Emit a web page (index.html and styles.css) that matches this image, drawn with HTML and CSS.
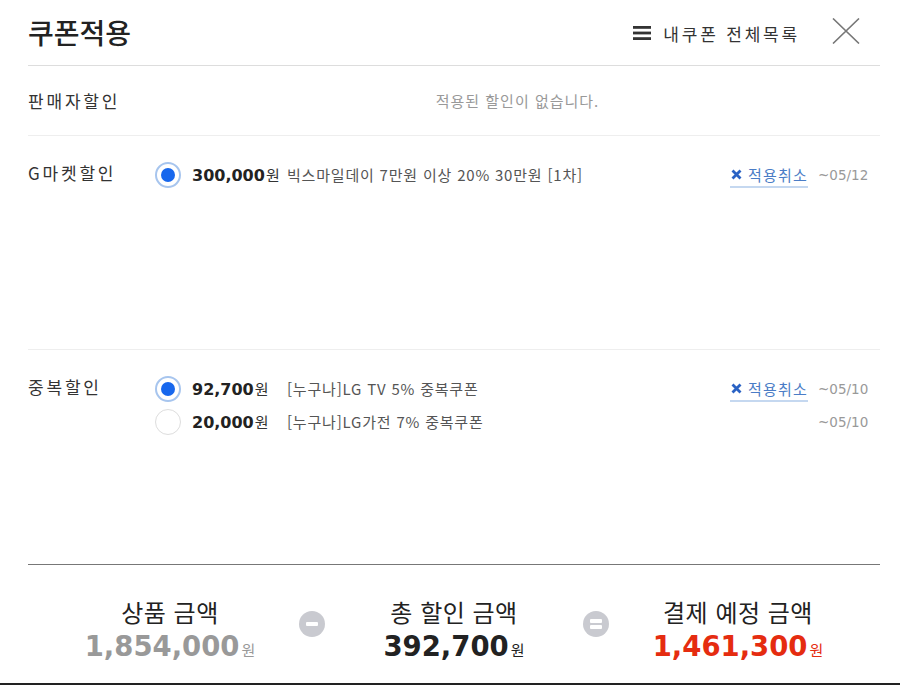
FILE: index.html
```html
<!DOCTYPE html>
<html lang="ko">
<head>
  <meta charset="UTF-8">
  <meta name="viewport" content="width=device-width, initial-scale=1.0">
  <title>쿠폰적용</title>
  <link rel="stylesheet" href="styles.css">
</head>
<body>
  <div class="layer">
    <header class="layer-head">
      <h1 class="title">쿠폰적용</h1>
      <a class="my-coupons" href="#">
        <svg class="menu-icon" width="18" height="14" viewBox="0 0 18 14">
          <rect x="0" y="0" width="18" height="2.8" fill="#333"/>
          <rect x="0" y="5.6" width="18" height="2.8" fill="#333"/>
          <rect x="0" y="11.2" width="18" height="2.8" fill="#333"/>
        </svg>
        내쿠폰 전체목록
      </a>
      <button class="close" type="button" aria-label="닫기">
        <svg width="28" height="26" viewBox="0 0 28 26">
          <path d="M1 0.5 L27 25.5 M27 0.5 L1 25.5" stroke="#777" stroke-width="1.6" fill="none"/>
        </svg>
      </button>
    </header>

    <section class="group group-seller">
      <div class="group-label">판매자할인</div>
      <div class="group-body">
        <p class="empty">적용된 할인이 없습니다.</p>
      </div>
    </section>

    <section class="group group-tall">
      <div class="group-label">G마켓할인</div>
      <ul class="group-body coupons">
        <li class="coupon">
          <span class="radio checked"></span>
          <span class="amount"><b>300,000</b>원</span>
          <span class="desc">빅스마일데이 7만원 이상 20% 30만원 [1차]</span>
          <a class="cancel" href="#">
            <svg class="cancel-x" width="11" height="11" viewBox="0 0 11 11">
              <path d="M1.5 1.5 L9.5 9.5 M9.5 1.5 L1.5 9.5" stroke="#2a62c4" stroke-width="2.8" fill="none"/>
            </svg>적용취소</a>
          <span class="date">~05/12</span>
        </li>
      </ul>
    </section>

    <section class="group group-tall group-last">
      <div class="group-label">중복할인</div>
      <ul class="group-body coupons">
        <li class="coupon">
          <span class="radio checked"></span>
          <span class="amount"><b>92,700</b>원</span>
          <span class="desc">[누구나]LG TV 5% 중복쿠폰</span>
          <a class="cancel" href="#">
            <svg class="cancel-x" width="11" height="11" viewBox="0 0 11 11">
              <path d="M1.5 1.5 L9.5 9.5 M9.5 1.5 L1.5 9.5" stroke="#2a62c4" stroke-width="2.8" fill="none"/>
            </svg>적용취소</a>
          <span class="date">~05/10</span>
        </li>
        <li class="coupon">
          <span class="radio"></span>
          <span class="amount"><b>20,000</b>원</span>
          <span class="desc">[누구나]LG가전 7% 중복쿠폰</span>
          <span class="date">~05/10</span>
        </li>
      </ul>
    </section>

    <div class="summary">
      <div class="sum-item">
        <div class="sum-label">상품 금액</div>
        <div class="sum-price price-gray"><b>1,854,000</b>원</div>
      </div>
      <span class="op op-minus"></span>
      <div class="sum-item">
        <div class="sum-label">총 할인 금액</div>
        <div class="sum-price"><b>392,700</b>원</div>
      </div>
      <span class="op op-equal"></span>
      <div class="sum-item">
        <div class="sum-label">결제 예정 금액</div>
        <div class="sum-price price-red"><b>1,461,300</b>원</div>
      </div>
    </div>
  </div>
</body>
</html>
```

FILE: styles.css
```css
* {
  box-sizing: border-box;
}

body {
  margin: 0;
  width: 900px;
  height: 685px;
  background: #fff;
  color: #333;
  font-family: 'Noto Sans CJK KR', 'Noto Sans', sans-serif;
}

ul {
  margin: 0;
  padding: 0;
  list-style: none;
}

a {
  text-decoration: none;
}

.layer {
  height: 685px;
  padding: 0 20px 0 28px;
  border-bottom: 2px solid #222;
}

.layer-head {
  display: flex;
  align-items: center;
  height: 66px;
  border-bottom: 1px solid #ddd;
}

.title {
  flex: 1;
  margin: 0;
  font-size: 28px;
  font-weight: 500;
  color: #222;
  line-height: 63px;
}

.my-coupons {
  display: flex;
  align-items: center;
  gap: 12px;
  margin-top: 1px;
  font-size: 17px;
  letter-spacing: 2.8px;
  color: #333;
}

.close {
  margin: 0 20px 3px 32px;
  padding: 0;
  border: 0;
  background: none;
  display: flex;
}

.group {
  display: flex;
  border-bottom: 1px solid #eee;
}

.group-label {
  width: 127px;
  flex-shrink: 0;
  font-size: 17px;
  letter-spacing: 2.8px;
  color: #333;
}

.group-body {
  flex: 1;
}

.group-seller {
  height: 70px;
  align-items: center;
}

.group-seller .group-label {
  padding-bottom: 1px;
}

.empty {
  margin: 0;
  text-align: center;
  font-size: 15px;
  letter-spacing: 1px;
  color: #999;
}

.group-tall {
  height: 214px;
  padding-top: 22px;
}

.group-tall .group-label {
  line-height: 29px;
}

.group-last {
  height: 215px;
  border-bottom-color: #777;
}

.coupon {
  display: flex;
  align-items: center;
  height: 33px;
  padding-right: 12px;
}

.radio {
  width: 26px;
  height: 26px;
  flex-shrink: 0;
  border: 1px solid #ddd;
  border-radius: 50%;
  margin-right: 11px;
  position: relative;
}

.radio.checked {
  border: 2px solid #a7c5ee;
}

.radio.checked::after {
  content: '';
  position: absolute;
  left: 4px;
  top: 4px;
  width: 14px;
  height: 14px;
  border-radius: 50%;
  background: #1767ed;
}

.amount {
  width: 95px;
  flex-shrink: 0;
  font-size: 15px;
  color: #333;
}

.amount b {
  font-family: 'DejaVu Sans', sans-serif;
  font-size: 16px;
  color: #222;
  margin-right: 1px;
}

.desc {
  flex: 1;
  font-size: 15px;
  letter-spacing: 0.8px;
  color: #555;
}

.cancel {
  display: flex;
  align-items: center;
  font-size: 15px;
  letter-spacing: 1.2px;
  color: #4a7cc6;
  border-bottom: 2px solid #c5d8f0;
  line-height: 22px;
  margin-top: 2px;
}

.cancel-x {
  margin: 0 6px 0 1px;
}

.date {
  width: 50px;
  margin-left: 10px;
  text-align: right;
  font-family: 'DejaVu Sans', sans-serif;
  font-size: 13.5px;
  color: #999;
}

.summary {
  display: grid;
  grid-template-columns: 1fr 26px 1fr 26px 1fr;
  align-items: start;
  height: 117px;
  margin: 0 13px;
  padding-top: 30px;
}

.sum-item {
  text-align: center;
}

.sum-label {
  font-size: 24px;
  color: #222;
  line-height: 34px;
  letter-spacing: 0.5px;
}

.sum-price {
  font-size: 15px;
  color: #222;
  line-height: 34px;
}

.sum-price b {
  font-family: 'DejaVu Sans', sans-serif;
  font-size: 27.5px;
  margin-right: 2px;
}

.price-gray {
  color: #999;
}

.price-red {
  color: #e52c10;
}

.op {
  width: 26px;
  height: 26px;
  margin-top: 16px;
  border-radius: 50%;
  background: #c9cad0;
  position: relative;
}

.op::before,
.op::after {
  content: '';
  position: absolute;
  left: 7px;
  width: 12px;
  height: 3.5px;
  border-radius: 1px;
  background: #fff;
}

.op-minus::before {
  top: 11px;
}

.op-minus::after {
  display: none;
}

.op-equal::before {
  top: 8px;
}

.op-equal::after {
  top: 14px;
}
```
